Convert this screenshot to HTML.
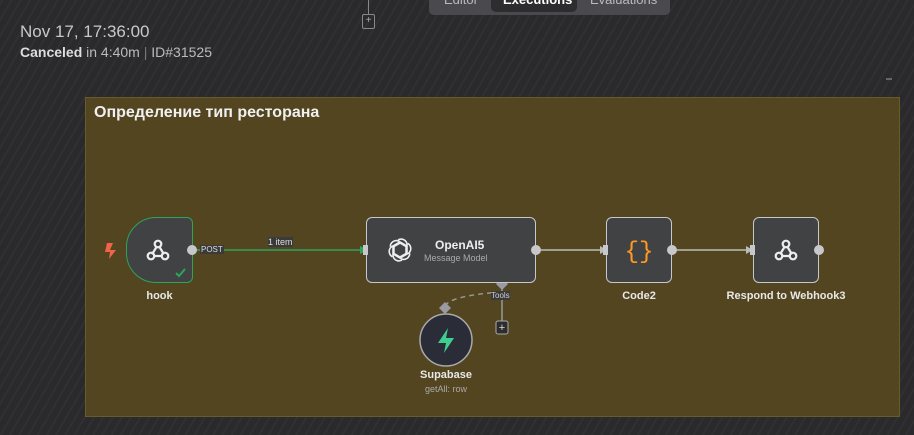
<!DOCTYPE html>
<html><head><meta charset="utf-8"><style>
body{margin:0;width:914px;height:435px;overflow:hidden;font-family:"Liberation Sans",sans-serif;
background:repeating-linear-gradient(-60deg,#2a2a2c 0 6px,#303032 6px 8px);position:relative;color:#ddd}
.a{position:absolute}
.node{position:absolute;background:#414244;border:1.5px solid #c8c8cc;border-radius:6px;box-sizing:border-box}
.lbl{position:absolute;font-size:11px;font-weight:bold;color:#e8e8e8;text-align:center}
</style></head><body>
<div class="a" style="left:429px;top:-6px;width:241px;height:21px;background:#4a4a4e;border-radius:5px"></div>
<div class="a" style="left:491px;top:-6px;width:86px;height:18px;background:#2d2d2f;border-radius:5px"></div>
<div class="a" style="left:444px;top:-8px;font-size:13px;color:#bbb">Editor</div>
<div class="a" style="left:503px;top:-8px;font-size:13px;color:#fff;font-weight:bold">Executions</div>
<div class="a" style="left:590px;top:-8px;font-size:13px;color:#bbb">Evaluations</div>
<div class="a" style="left:368px;top:0;width:1px;height:14px;background:#888"></div>
<div class="a" style="left:362px;top:14px;width:11px;height:13px;border:1px solid #888;border-radius:2px;font-size:10px;line-height:12px;text-align:center;color:#aaa">+</div>
<div class="a" style="left:20px;top:22px;font-size:17px;color:#c8c8cc">Nov 17, 17:36:00</div>
<div class="a" style="left:20px;top:44px;font-size:14px;color:#bbb"><b style="color:#ddd">Canceled</b> in 4:40m <span style="color:#777">|</span> ID#31525</div>
<div class="a" style="left:886px;top:78px;width:6px;height:2px;background:#666"></div>
<div class="a" style="left:85px;top:97px;width:815px;height:320px;background:#534520;border:1px solid #6a5a2a;box-sizing:border-box"></div>
<div class="a" style="left:94px;top:104px;font-size:16px;font-weight:bold;color:#f0f0f0">Определение тип ресторана</div>
<svg class="a" style="left:0;top:0" width="914" height="435">
<line x1="193" y1="250" x2="362" y2="250" stroke="#2fa35a" stroke-width="1.5"/>
<polygon points="360,246 368,250 360,254" fill="#2fa35a"/>
<line x1="536" y1="250" x2="602" y2="250" stroke="#bbb" stroke-width="1.5"/>
<polygon points="600,246 607,250 600,254" fill="#bbb"/>
<line x1="672" y1="250" x2="748" y2="250" stroke="#bbb" stroke-width="1.5"/>
<polygon points="746,246 753,250 746,254" fill="#bbb"/>
<path d="M445 306 Q450 296 500 292" stroke="#999" stroke-width="1.5" fill="none" stroke-dasharray="5 4"/>
<line x1="502" y1="286" x2="502" y2="321" stroke="#999" stroke-width="1.5"/>
<rect x="496" y="321" width="12" height="13" rx="2" fill="#2d2d30" stroke="#aaa"/>
<text x="502" y="331" font-size="11" fill="#ddd" text-anchor="middle">+</text>
<polygon points="502,278 508,284 502,290 496,284" fill="#9a9aa2"/>
<polygon points="445,302 451,308 445,314 439,308" fill="#9a9aa2"/>
<circle cx="446" cy="340" r="26" fill="#2a2c38" stroke="#aaa" stroke-width="1.5"/>
<path d="M448 328 L438 343 L446 343 L444 353 L454 338 L446 338 Z" fill="#3ecf8e"/>
<path d="M107 243 L113 243 L110 250 L116 250 L109 259 L110 252 L105 252Z" fill="#f0644a"/>
</svg>
<div class="node" style="left:126px;top:217px;width:67px;height:66px;border-color:#2fa35a;border-radius:30px 6px 6px 30px"></div>
<div class="node" style="left:366px;top:217px;width:170px;height:66px"></div>
<div class="node" style="left:606px;top:217px;width:66px;height:66px"></div>
<div class="node" style="left:753px;top:217px;width:66px;height:66px"></div>
<svg class="a" style="left:0;top:0" width="914" height="435">
<defs><g id="wh" fill="none" stroke="#eee" stroke-width="2.2" stroke-linecap="round">
<circle cx="0" cy="-6" r="3.3"/><circle cx="-7" cy="6" r="3.3"/><circle cx="7" cy="6" r="3.3"/>
<path d="M-1.5 -3 L-5.5 3.5"/><path d="M-3.7 6 L3.7 6"/><path d="M1.5 -3 L5.5 3.5"/>
</g></defs>
<use href="#wh" x="158" y="250"/><use href="#wh" x="786" y="250"/>
<path d="M176 273 L179 276 L185 269" stroke="#2fa35a" stroke-width="2" fill="none"/>
<circle cx="192" cy="250" r="5" fill="#c8c8cc"/><circle cx="536" cy="250" r="5" fill="#c8c8cc"/>
<circle cx="672" cy="250" r="5" fill="#c8c8cc"/><circle cx="819" cy="250" r="5" fill="#c8c8cc"/>
<rect x="363" y="245" width="5" height="10" fill="#c8c8cc"/><rect x="603" y="245" width="5" height="10" fill="#c8c8cc"/><rect x="750" y="245" width="5" height="10" fill="#c8c8cc"/>
<g fill="none" stroke="#eee" stroke-width="1.6" transform="translate(400 250)">
<g id="pt"><path d="M-2 -10 A6 6 0 0 1 7 -6 L7 3 L-1 7.5"/></g>
<use href="#pt" transform="rotate(60)"/><use href="#pt" transform="rotate(120)"/><use href="#pt" transform="rotate(180)"/><use href="#pt" transform="rotate(240)"/><use href="#pt" transform="rotate(300)"/>
</g>
<text x="639" y="258" font-size="24" fill="#ff9922" text-anchor="middle" font-family="Liberation Mono">{}</text>
</svg>
<div class="a" style="left:200px;top:245px;font-size:8px;background:#3a3a3a;color:#ddd;padding:0 1px">POST</div>
<div class="a" style="left:268px;top:237px;font-size:9px;background:#3a3a3a;color:#ddd">1 item</div>
<div class="a" style="left:491px;top:291px;font-size:8px;background:#3a3a3a;color:#ccc">Tools</div>
<div class="a" style="left:435px;top:238px;font-size:12px;font-weight:bold;color:#eee">OpenAI5</div>
<div class="a" style="left:424px;top:253px;font-size:9px;color:#aaa">Message Model</div>
<div class="lbl" style="left:126px;top:290px;width:67px">hook</div>
<div class="lbl" style="left:606px;top:290px;width:66px">Code2</div>
<div class="lbl" style="left:716px;top:290px;width:140px">Respond to Webhook3</div>
<div class="lbl" style="left:396px;top:369px;width:100px">Supabase</div>
<div class="a" style="left:396px;top:384px;width:100px;text-align:center;font-size:9px;color:#aaa">getAll: row</div>
</body></html>
